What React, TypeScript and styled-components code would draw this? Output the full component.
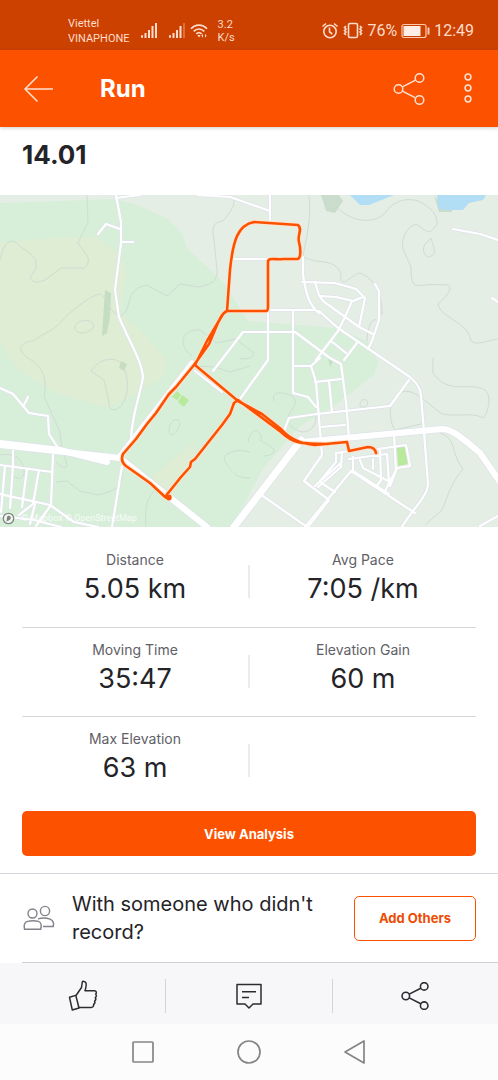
import React from "react";
import styled, { createGlobalStyle } from "styled-components";

const GlobalStyle = createGlobalStyle`
  * { box-sizing: border-box; }
  body {
    margin: 0;
    background: #ffffff;
    color: #242428;
    font-family: Inter, "Liberation Sans", sans-serif;
  }
  button { font: inherit; color: inherit; background: none; border: 0; padding: 0; cursor: pointer; }
  svg { display: block; }
`;

const ORANGE = "#fc5200";

const Screen = styled.div`
  min-height: 100vh;
  display: flex;
  flex-direction: column;
`;

const StatusBar = styled.div`
  height: 50px;
  padding: 14px 24px 0 68px;
  background: #cc4100;
  color: #ffdccb;
  font-family: Roboto, sans-serif;
  display: flex;
  justify-content: space-between;
`;

const StatusGroup = styled.div<{ $gap: number }>`
  display: flex;
  align-items: center;
  height: 34px;
  gap: ${(p) => p.$gap}px;
`;

const StackedText = styled.div<{ $line: number }>`
  font-size: 11px;
  line-height: ${(p) => p.$line}px;
`;

const StatusText = styled.span`
  font-size: 16px;
  line-height: 20px;
`;

const AppBar = styled.header`
  height: 77px;
  padding: 0 22px;
  background: ${ORANGE};
  color: #ffffff;
  display: flex;
  align-items: center;
  box-shadow: 0 1px 4px rgba(0, 0, 0, 0.2);
`;

const AppTitle = styled.h1`
  flex: 1;
  margin: 0 0 0 46px;
  font-size: 24px;
  line-height: 32px;
  font-weight: 700;
`;

const BarButton = styled.button`
  display: flex;
  align-items: center;
  justify-content: center;
  width: 32px;
  height: 40px;
`;

const BarActions = styled.div`
  display: flex;
  gap: 27px;
  margin-right: -8px;
`;

const ActivityTitle = styled.h2`
  margin: 0;
  height: 68px;
  padding: 12px 22px 0;
  font-size: 26px;
  line-height: 32px;
  font-weight: 700;
`;

const MapFrame = styled.div`
  width: 100%;
  svg { width: 100%; height: auto; }
`;

const Stats = styled.dl`
  margin: 0 22px;
`;

const StatRow = styled.div<{ $first?: boolean }>`
  display: grid;
  grid-template-columns: 1fr 2px 1fr;
  height: ${(p) => (p.$first ? 101 : 89)}px;
  padding-top: ${(p) => (p.$first ? 22 : 11)}px;
  border-bottom: 1px solid #d6d6dc;
  &:last-child { border-bottom: 0; }
`;

const Stat = styled.div`
  text-align: center;
`;

const StatLabel = styled.dt`
  font-size: 14px;
  line-height: 22px;
  color: #606066;
`;

const StatValue = styled.dd`
  margin: 2px 0 0;
  font-size: 27px;
  line-height: 32px;
`;

const StatDivider = styled.div`
  height: 33px;
  margin-top: 16px;
  background: #ebebed;
`;

const AnalysisButton = styled.button`
  height: 45px;
  margin: 5px 22px 17px;
  border-radius: 5px;
  background: ${ORANGE};
  color: #ffffff;
  font-size: 13px;
  font-weight: 700;
`;

const Invite = styled.section`
  display: flex;
  align-items: center;
  height: 89px;
  padding: 0 22px;
  border-top: 1px solid #d6d6dc;
`;

const InviteText = styled.p`
  flex: 1;
  margin: 0 20px 0 16px;
  font-size: 20px;
  line-height: 28px;
`;

const OutlineButton = styled.button`
  width: 122px;
  height: 45px;
  border: 1px solid ${ORANGE};
  border-radius: 5px;
  color: #ec4d05;
  font-size: 13px;
  font-weight: 700;
`;

const Rule = styled.div`
  height: 1px;
  margin-left: 22px;
  background: #cfcfd7;
`;

const ActionBar = styled.footer`
  display: grid;
  grid-template-columns: 1fr 1px 1fr 1px 1fr;
  align-items: center;
  height: 61px;
  margin-top: auto;
  padding-top: 4px;
  background: #f7f7fa;
`;

const ActionButton = styled.button`
  display: flex;
  align-items: center;
  justify-content: center;
  height: 44px;
`;

const ActionDivider = styled.div`
  height: 34px;
  background: #d4d4d8;
`;

const SystemNav = styled.nav`
  display: flex;
  justify-content: center;
  align-items: center;
  gap: 74px;
  height: 56px;
  background: #fcfcfc;
`;

const NavButton = styled.button`
  display: flex;
  align-items: center;
  justify-content: center;
  width: 32px;
  height: 40px;
`;

const SignalIcon = ({ weak }: { weak?: boolean }) => (
  <svg width="18" height="18" viewBox="0 0 18 18" fill="#ffdccb">
    <rect x="1" y="13" width="2" height="3" rx="1" />
    <rect x="4.500" y="11" width="2" height="5" />
    <rect x="8" y="8" width="2" height="8" />
    <rect x="11.500" y="4" width="2" height="12" />
    <rect x="15" y="1" width="2" height="15" opacity={weak ? 0.3 : 1} />
  </svg>
);

const WifiIcon = () => (
  <svg width="18" height="16" viewBox="0 0 20 18" fill="none" stroke="#ffdccb" strokeWidth="1.900">
    <path d="M1 6.500C6 1 14 1 19 6.500M4 9.500c3.600-3.600 8.400-3.600 12 0M7 12.300c1.800-1.700 4.200-1.700 6 0" />
    <path d="M8.200 13.500h3.600L10 16.300z M12.700 14.300l1.800-2.300v4.600z M18.500 14.300l-1.800-2.300v4.600z" fill="#ffdccb" stroke="none" />
  </svg>
);

const AlarmIcon = () => (
  <svg width="18" height="18" viewBox="0 0 18 18" fill="none" stroke="#ffdccb" strokeWidth="1.600">
    <circle cx="9" cy="9.500" r="6.200" />
    <path d="M8.500 5.500v4.300l2.800 2.200M1.500 4.500l3.500-3M16.500 4.500l-3.500-3" />
  </svg>
);

const VibrateIcon = () => (
  <svg width="20" height="18" viewBox="0 0 20 18" fill="none" stroke="#ffdccb" strokeWidth="1.600">
    <rect x="5.500" y="1.500" width="9" height="14" rx="1.500" />
    <path d="M3 4L1.500 5.500 3 7 1.500 8.500 3 10 1.500 11.500 3 13M17 4l1.500 1.500L17 7l1.500 1.500L17 10l1.500 1.500L17 13" />
  </svg>
);

const BatteryIcon = () => (
  <svg width="29" height="16" viewBox="0 0 29 16" fill="none" stroke="#ffc9ad">
    <rect x="1" y="1.500" width="24" height="13" rx="2" strokeWidth="1.200" />
    <rect x="2.500" y="3" width="17" height="10" fill="#ffeee6" stroke="none" />
    <path d="M27.500 4.500v7" strokeWidth="2" />
  </svg>
);

const ShareIcon = ({ size, color }: { size: number; color: string }) => (
  <svg width={size} height={size} viewBox="0 0 32 32" fill="none" stroke={color} strokeWidth={size > 30 ? 1.5 : 1.8}>
    <circle cx="5.500" cy="16" r="4.300" />
    <circle cx="26.500" cy="5" r="4.300" />
    <circle cx="26.500" cy="27" r="4.300" />
    <path d="M9.400 13.900l13.200-6.800M9.400 18.100l13.200 6.800" />
  </svg>
);

const PeopleIcon = () => (
  <svg width="34" height="28" viewBox="0 0 34 28" fill="none" stroke="#82828a" strokeWidth="1.400">
    <circle cx="10.500" cy="9.500" r="4.500" />
    <circle cx="23" cy="7" r="4.600" />
    <path d="M2.500 25.300c-1.200-4 .3-7.300 3-7.900 3.500-.9 7.500-.9 11 0 2.500.7 3.400 4 2.200 7.900z" />
    <path d="M16 14.800c4.200-1.200 8.500-1 12 .3 3 1.200 4.100 3.700 3.300 7.400H21" />
  </svg>
);

const ThumbIcon = () => (
  <svg width="30" height="32" viewBox="0 0 30 32" fill="none" stroke="#2c2c30" strokeWidth="1.500" strokeLinejoin="round">
    <path d="M8 15.500l5.500-8 .8-5.500c.2-1 2.700-.8 3.500.6.9 1.700.5 4-.8 8.200h9.500c1.900 0 2.400 2 1.200 3.300 1 1.200.8 2.700-.4 3.500.8 1.300.5 2.600-.7 3.400.6 1.500.2 2.800-1 3.500.2 1.700-.7 3-2.400 3H10.500" />
    <path d="M1.500 17.300L7.800 15.400 11 28 4.300 30z" />
  </svg>
);

const CommentIcon = () => (
  <svg width="28" height="28" viewBox="0 0 28 28" fill="none" stroke="#2c2c30" strokeWidth="1.500" strokeLinejoin="round">
    <path d="M2 2.500h24v19.500h-8L14 26l-4-4H2z" />
    <path d="M7 9.700h14M7 15.500h7" />
  </svg>
);

const contours = [
  "M87 195L88 222 78 243C84 252 90 257 88 263L85 268H61L45 280C39 282 33 284 30 278L36 268V260C30 251 21 249 18 244 8 236 3 246 0 260",
  "M28 358C16 350 20 342 33 341 44 333 53 331 61 322 75 306 95 294 100 294 111 300 107 312 120 316 132 312 125 294 140 287L147 285 167 296 180 284 198 287C212 285 218 280 217 270L214 240C209 216 223 226 226 217 234 208 234 203 234 200",
  "M75 327C76 319 93 318 94 326 90 335 74 335 75 327z",
  "M28 358C45 368 47 382 44 396L60 432 62 450C70 470 67 467 62 467L56 462M0 455C17 452 25 462 24 474 22 480 16 479 14 476M56 482L67 481 80 491 98 495C116 490 124 487 122 470",
  "M91 371C99 358 117 355 123 366 131 382 127 400 120 407 114 412 108 410 109 402L104 380z",
  "M169 430C170 418 180 417 180 424 177 435 170 439 169 430z",
  "M146 527C144 500 150 496 156 489M250 452C236 448 225 453 224 459 229 469 235 479 250 478",
  "M196 366L215 367 230 372 250 366M192 356C178 346 180 329 200 330L216 343 236 339 254 353C252 361 246 358 240 359",
  "M309 195C312 221 305 242 303 256 316 266 334 256 341 274 339 292 352 274 360 273 377 280 382 295 382 315M367 341C367 328 372 318 376 320M328 195C343 223 373 226 385 213 392 202 405 197 418 201 429 206 438 214 437 224 429 237 427 231 416 224 405 228 401 241 403 249L411 267C411 295 417 282 442 285 458 282 446 298 438 304 441 319 467 320 471 341 477 346 485 341 498 339",
  "M425 244C421 251 426 257 428 257 437 255 435 251 431 238z",
  "M433 358V373C449 396 469 381 485 390 493 397 487 415 483 418 473 412 459 417 442 414 426 403 411 383 397 395 386 405 391 425 395 430L425 423M274 401C270 388 289 394 292 396 302 405 285 411 288 423 303 440 317 430 316 415",
  "M360 404C361 397 370 399 367 405 363 409 359 407 360 404zM248 442C252 423 263 432 261 441 281 450 275 455 264 456M440 433C458 440 449 450 463 469 451 483 449 493 442 510L425 525",
];

const lanes = [
  "M116 195L121 222V243L115 290 119 317C129 341 141 359 143 377 139 400 132 414 131 439M98 234L106 224 120 229M121 242H133M116 198L140 195",
  "M198 195L230 197 250 204 270 211M270 195V225M233 259H270M303 257V275C306 293 309 306 319 313M269 310H314",
  "M302 282L335 283 356 289 365 298 359 327M315 282L319 295 323 301 359 327 373 334M321 296L336 297 353 301 363 297M352 301L345 317 338 331 316 360M375 284L379 291V320L372 341 368 349M492 298L498 302",
  "M319 311L338 328 385 360 410 377C418 384 421 389 421 396L424 432 428 484C427 498 412 509 402 527",
  "M268 311V360L240 399M213 371L223 358 243 332H295L330 358 341 364 346 402 349 438M293 310V393L308 397 316 407M331 341L346 353M357 343L344 360M293 366L311 366 320 358M311 366L316 382 322 455 304 481 329 500 308 527",
  "M284 431L289 418 317 414 390 406 409 380M315 382L341 379M329 381L332 412M320 427L345 425M353 457V471L389 494M394 435L396 470 384 493M378 449L406 445 410 466 397 468 390 486",
  "M320 481L336 462V453L350 451M315 486L342 462M342 453L341 467 318 487M351 471L305 527M320 482L335 492M260 494L307 527M349 459L387 454 389 482M360 460L363 468 390 482M373 459V469M380 450L381 480 376 487M351 471L415 513",
  "M0 388L13 394 29 413 48 416 49 434 58 448M24 405L28 397M122 466L112 527M13 451V465L10 508M0 465L52 472M53 455L51 505 36 526M5 466L1 512M27 469L22 507M39 470L33 504 19 515M0 494L50 505 74 522 98 527M35 504L30 524M0 516L34 520 61 527",
  "M453 229L480 234 498 240M480 526L498 516M195 371L222 392",
];

const mainRoads = [
  { d: "M0 445L120 458 207 527", w: 6 },
  { d: "M0 443L60 450 107 462", w: 6 },
  { d: "M119 457L192 363", w: 5 },
  { d: "M301 442L442 429C450 429 458 434 480 453L500 482", w: 6 },
  { d: "M301 440L234 527", w: 7 },
];

const runRoute =
  "M376 453C375 448 372 447 368 447L349 451 347 442 315 445C300 444 290 439 281 429L262 414 238 401 195 365 207 341 223 314 227 311 230 270C233 240 238 225 254 222L298 225C303 229 297 235 299 242 301 250 301 259 297 259H283C275 260 268 257 268 262V307C268 312 266 311 263 311H227C220 314 217 326 209 344L194 365 176 387 169 394 156 413 147 424 136 439 123 454C121 459 122 463 126 466L150 483 164 496C168 500 171 498 170 496 165 498 166 495 169 492L181 477 190 467 191 462 195 459 222 425 230 414 234 403 238 400 281 432C296 446 305 443 328 444";

const RouteMap = () => (
  <svg viewBox="0 195 498 332" role="img" aria-label="Route map">
    <rect y="195" width="498" height="332" fill="#e4eee5" />
    <path fill="#d7efd9" d="M0 203L115 199 135 204 168 219 183 235 186 247 224 283 248 321 338 328 370 343 378 362 374 375 333 407 300 426 262 470 232 527H0z" />
    <path fill="#deedd4" d="M0 243L60 237 96 237Q130 256 126 278L120 312 145 335 165 358Q170 370 160 379L128 398 108 408 56 393 18 370 0 342zM194 441Q196 452 188 469L168 500 151 478z" />
    <path fill="#c5dec3" d="M105 290L111 293 110 317 107 333 102 336zM121 361L127 364 124 371 119 368zM328 358L334 359 330 367z" />
    <path fill="#cadccb" d="M321 195H339L343 201 335 213 326 211zM434 195L439 212H452V207L440 204z" />
    <path fill="#b2def5" d="M350 195L360 205H369L394 195zM437 195L438 207 442 210H463L469 203 483 200 486 195z" />
    <path fill="#b9e99b" d="M177 391L181 395 177 400 172 397zM182 395L189 400 184 407 178 402zM397 447L405 446 408 464 398 466z" />
    <g fill="none" stroke="#cfdcd2" strokeWidth="1">
      {contours.map((d) => <path key={d} d={d} />)}
    </g>
    <g fill="none" strokeLinecap="round" strokeLinejoin="round">
      <g stroke="#dfe3ea">
        {lanes.map((d) => <path key={d} d={d} strokeWidth="3.600" />)}
        {mainRoads.map((r) => <path key={r.d} d={r.d} strokeWidth={r.w + 1.5} />)}
      </g>
      <g stroke="#ffffff">
        {lanes.map((d) => <path key={d} d={d} strokeWidth="2.200" />)}
        {mainRoads.map((r) => <path key={r.d} d={r.d} strokeWidth={r.w} />)}
      </g>
      <path d={runRoute} stroke="#ffe3cf" strokeWidth="4.500" />
      <path d={runRoute} stroke={ORANGE} strokeWidth="2.600" />
    </g>
    <circle cx="169" cy="498" r="2.500" fill={ORANGE} />
    <circle cx="8.500" cy="518.500" r="5.200" fill="#f4f7f4" stroke="#7e8780" strokeWidth="1.300" />
    <path d="M6.500 521.500L7 517C8 514.500 12 516.500 10.500 519 9.500 520.500 8 520.500 6.500 521.500z" fill="#7e8780" />
    <text x="21" y="521" fill="#ffffff" opacity="0.8" fontFamily="Roboto, sans-serif" fontSize="9">© Mapbox © OpenStreetMap</text>
  </svg>
);

const statRows = [
  [["Distance", "5.05 km"], ["Avg Pace", "7:05 /km"]],
  [["Moving Time", "35:47"], ["Elevation Gain", "60 m"]],
  [["Max Elevation", "63 m"]],
];

const StatCell = ({ stat }: { stat: string[] }) => (
  <Stat>
    <StatLabel>{stat[0]}</StatLabel>
    <StatValue>{stat[1]}</StatValue>
  </Stat>
);

export default function App() {
  return (
    <Screen>
      <GlobalStyle />
      <StatusBar>
        <StatusGroup $gap={10}>
          <StackedText $line={15}>Viettel<br />VINAPHONE</StackedText>
          <SignalIcon />
          <StatusGroup $gap={4}>
            <SignalIcon weak />
            <WifiIcon />
          </StatusGroup>
          <StackedText $line={13}>3.2<br />K/s</StackedText>
        </StatusGroup>
        <StatusGroup $gap={4}>
          <AlarmIcon />
          <VibrateIcon />
          <StatusText>76%</StatusText>
          <BatteryIcon />
          <StatusText>12:49</StatusText>
        </StatusGroup>
      </StatusBar>
      <AppBar>
        <BarButton aria-label="Back">
          <svg width="32" height="28" viewBox="0 0 32 28" fill="none" stroke="#ffe1d2" strokeWidth="1.500">
            <path d="M31 14H3M15.500 1.500L3 14l12.500 12.500" />
          </svg>
        </BarButton>
        <AppTitle>Run</AppTitle>
        <BarActions>
          <BarButton aria-label="Share"><ShareIcon size={32} color="#ffe1d2" /></BarButton>
          <BarButton aria-label="More options">
            <svg width="10" height="32" viewBox="0 0 10 32" fill="none" stroke="#ffe1d2" strokeWidth="1.500">
              <circle cx="5" cy="4" r="2.900" />
              <circle cx="5" cy="15" r="2.900" />
              <circle cx="5" cy="26" r="2.900" />
            </svg>
          </BarButton>
        </BarActions>
      </AppBar>
      <ActivityTitle>14.01</ActivityTitle>
      <MapFrame><RouteMap /></MapFrame>
      <Stats>
        {statRows.map((row, i) => (
          <StatRow key={row[0][0]} $first={i === 0}>
            <StatCell stat={row[0]} />
            <StatDivider />
            {row[1] && <StatCell stat={row[1]} />}
          </StatRow>
        ))}
      </Stats>
      <AnalysisButton>View Analysis</AnalysisButton>
      <Invite>
        <PeopleIcon />
        <InviteText>With someone who didn't record?</InviteText>
        <OutlineButton>Add Others</OutlineButton>
      </Invite>
      <Rule />
      <ActionBar>
        <ActionButton aria-label="Give kudos"><ThumbIcon /></ActionButton>
        <ActionDivider />
        <ActionButton aria-label="Comment"><CommentIcon /></ActionButton>
        <ActionDivider />
        <ActionButton aria-label="Share activity"><ShareIcon size={28} color="#2c2c30" /></ActionButton>
      </ActionBar>
      <SystemNav>
        <NavButton aria-label="Recent apps">
          <svg width="24" height="24" viewBox="0 0 24 24" fill="none" stroke="#858585" strokeWidth="1.700"><rect x="2" y="2" width="20" height="20" rx="1" /></svg>
        </NavButton>
        <NavButton aria-label="Home">
          <svg width="24" height="24" viewBox="0 0 24 24" fill="none" stroke="#858585" strokeWidth="1.700"><circle cx="12" cy="12" r="11" /></svg>
        </NavButton>
        <NavButton aria-label="Go back">
          <svg width="24" height="24" viewBox="0 0 24 24" fill="none" stroke="#858585" strokeWidth="1.700" strokeLinejoin="round"><path d="M21 1v22L2 12z" /></svg>
        </NavButton>
      </SystemNav>
    </Screen>
  );
}
